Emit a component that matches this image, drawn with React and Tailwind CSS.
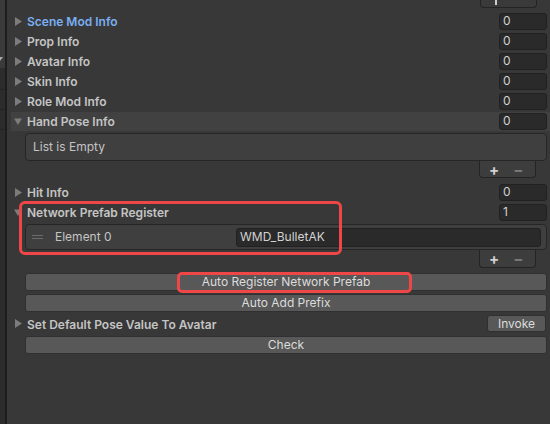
const Arrow = ({ open }) => (
  <svg width="8" height="9" viewBox="0 0 8 9" className="shrink-0">
    {open ? <polygon points="0,1.5 8,1.5 4,8" fill="#7c7c7c" /> : <polygon points="1,0 8,4.5 1,9" fill="#7c7c7c" />}
  </svg>
);

const Field = ({ value }) => (
  <div className="w-[48px] h-[17px] mr-[3px] ml-auto rounded-[3px] bg-[#2a2a2a] border border-[#212121] flex items-center pl-[3px] text-[12px] text-[#d2d2d2]">
    {value}
  </div>
);

const Foldout = ({ label, open, blue, value, highlight }) => (
  <div className="h-[20px] flex items-center">
    <div className={`flex-1 flex items-center h-[19px] ${highlight ? 'ml-[4px] bg-[#414141] pl-[3px]' : 'pl-[7px]'}`}>
      <Arrow open={open} />
      <span className={`ml-[5px] pt-[2px] text-[12px] font-semibold ${blue ? 'text-[#7baef3]' : 'text-[#c4c4c4]'}`}>{label}</span>
      <Field value={value} />
    </div>
  </div>
);

const Footer = ({ h }) => (
  <div className={`ml-auto mr-[14px] w-[57px] ${h} bg-[#3d3d3d] border border-t-0 border-[#242424] rounded-b-[4px] flex items-center pl-[9px] gap-[14px] text-[15px] leading-none`}>
    <span className="text-[#d0d0d0] font-bold">+</span>
    <span className="text-[#7a7a7a] font-bold">−</span>
  </div>
);

const Button = ({ children, className = '' }) => (
  <div className={`h-[18px] ml-[18px] mr-[3px] rounded-[3px] bg-[#585858] border border-[#303030] flex items-center justify-center text-[12px] text-[#dcdcdc] ${className}`}>
    {children}
  </div>
);

export default function App() {
  return (
    <div className="w-[550px] h-[424px] bg-[#383838] flex overflow-hidden relative" style={{ fontFamily: 'Inter, "Noto Sans", sans-serif' }}>
      <div className="w-[5px] flex flex-col shrink-0">
        <div className="h-[68px] bg-[#3a3a3a] pt-[57px]">
          <svg width="3" height="4" viewBox="0 0 3 4">
            <polygon points="0,0 3,0 0,4" fill="#aaaaaa" />
          </svg>
        </div>
        <div className="flex-1 bg-[#2c2c2c] flex flex-col">
          <div className="h-[22px] border-b border-[#232323]"></div>
          <div className="h-[20px] border-b border-[#232323]"></div>
          <div className="h-[20px] border-b border-[#232323]"></div>
        </div>
      </div>
      <div className="w-[2px] bg-[#1d1d1d] shrink-0"></div>
      <div className="flex-1 flex flex-col">
        <div className="h-[8px] ml-[473px] w-[57px] bg-[#3a3a3a] border border-t-0 border-[#242424] rounded-b-[4px] relative">
          <div className="absolute left-[14px] top-0 w-[2px] h-[5px] bg-[#cfcfcf]"></div>
        </div>
        <div className="h-[3px]"></div>
        <Foldout label="Scene Mod Info" blue value="0" />
        <Foldout label="Prop Info" value="0" />
        <Foldout label="Avatar Info" value="0" />
        <Foldout label="Skin Info" value="0" />
        <Foldout label="Role Mod Info" value="0" />
        <Foldout label="Hand Pose Info" open highlight value="0" />
        <div className="mt-[2px] h-[28px] ml-[18px] mr-[3px] bg-[#3f3f3f] border border-[#262626] rounded-[4px] flex items-center pl-[7px] text-[12px] text-[#c4c4c4]">
          List is Empty
        </div>
        <Footer h="h-[17px]" />
        <div className="h-[4px]"></div>
        <Foldout label="Hit Info" value="0" />
        <Foldout label="Network Prefab Register" open value="1" />
        <div className="mt-[2px] h-[26px] ml-[18px] mr-[3px] bg-[#3f3f3f] border border-[#262626] rounded-[4px] flex items-center">
          <div className="ml-[6px] w-[11px] flex flex-col gap-[2px]">
            <div className="h-[1px] bg-[#6a6a6a]"></div>
            <div className="h-[1px] bg-[#6a6a6a]"></div>
          </div>
          <span className="ml-[12px] text-[12px] text-[#c4c4c4]">Element 0</span>
          <div className="ml-auto mr-[5px] w-[305px] h-[19px] rounded-[3px] bg-[#2a2a2a] border border-[#212121] flex items-center pl-[3px] text-[12px] text-[#d2d2d2]">
            WMD_BulletAK
          </div>
        </div>
        <Footer h="h-[18px]" />
        <div className="h-[5px]"></div>
        <Button>Auto Register Network Prefab</Button>
        <Button className="mt-[3px]">Auto Add Prefix</Button>
        <div className="h-[23px] flex items-center pl-[7px]">
          <Arrow />
          <span className="ml-[5px] pt-[2px] text-[12px] font-semibold text-[#c4c4c4]">Set Default Pose Value To Avatar</span>
          <div className="ml-auto mr-[4px] w-[59px] h-[17px] rounded-[3px] bg-[#585858] border border-[#303030] flex items-center justify-center text-[12px] text-[#dcdcdc]">
            Invoke
          </div>
        </div>
        <Button className="mt-[1px] h-[17px]">Check</Button>
      </div>
      <div className="absolute left-[19px] top-[201px] w-[323px] h-[54px] border-[3px] border-[#ef4747] rounded-[6px] pointer-events-none"></div>
      <div className="absolute left-[177px] top-[272px] w-[235px] h-[21px] border-[3px] border-[#ef4747] rounded-[5px] pointer-events-none"></div>
    </div>
  );
}
